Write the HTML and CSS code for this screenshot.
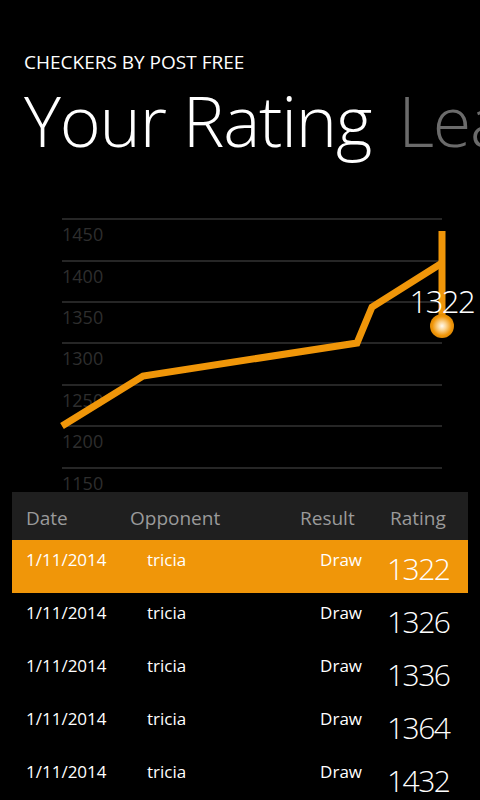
FILE: index.html
```html
<!DOCTYPE html>
<html lang="en">

<head>
    <meta charset="UTF-8">
    <meta name="viewport" content="width=device-width, initial-scale=1.0">
    <title>Checkers By Post Free</title>
    <link rel="stylesheet" href="styles.css">
</head>

<body>
    <header>
        <div class="app-title">CHECKERS BY POST FREE</div>
        <div class="pivot">
            <span class="pivot-item active">Your Rating</span>
            <span class="pivot-item">League</span>
        </div>
    </header>

    <div class="chart">
        <svg width="480" height="324" viewBox="0 168 480 324">
            <defs>
                <radialGradient id="dot" cx="50%" cy="50%" r="50%">
                    <stop offset="0%" stop-color="#fffaf0" />
                    <stop offset="35%" stop-color="#fbd390" />
                    <stop offset="80%" stop-color="#f09609" />
                    <stop offset="100%" stop-color="#e08a05" />
                </radialGradient>
            </defs>
            <g class="grid">
                <line x1="62" y1="219" x2="442" y2="219" />
                <line x1="62" y1="261" x2="442" y2="261" />
                <line x1="62" y1="302" x2="442" y2="302" />
                <line x1="62" y1="343" x2="442" y2="343" />
                <line x1="62" y1="385" x2="442" y2="385" />
                <line x1="62" y1="426" x2="442" y2="426" />
                <line x1="62" y1="468" x2="442" y2="468" />
            </g>
            <g class="axis">
                <text x="62" y="241">1450</text>
                <text x="62" y="283">1400</text>
                <text x="62" y="324">1350</text>
                <text x="62" y="365">1300</text>
                <text x="62" y="407">1250</text>
                <text x="62" y="448">1200</text>
                <text x="62" y="490">1150</text>
            </g>
            <polyline class="series" points="62,426 143,376 357,343 372,307 442,263" />
            <line class="series" x1="442" y1="231" x2="442" y2="326" />
            <text class="point-label" x="474" y="313">1322</text>
            <circle cx="442" cy="326" r="12" fill="url(#dot)" />
        </svg>
    </div>

    <div class="games">
        <div class="games-head">
            <span>Date</span>
            <span>Opponent</span>
            <span>Result</span>
            <span>Rating</span>
        </div>
        <div class="game selected">
            <span class="date">1/11/2014</span>
            <span class="opponent">tricia</span>
            <span class="result">Draw</span>
            <span class="rating">1322</span>
        </div>
        <div class="game">
            <span class="date">1/11/2014</span>
            <span class="opponent">tricia</span>
            <span class="result">Draw</span>
            <span class="rating">1326</span>
        </div>
        <div class="game">
            <span class="date">1/11/2014</span>
            <span class="opponent">tricia</span>
            <span class="result">Draw</span>
            <span class="rating">1336</span>
        </div>
        <div class="game">
            <span class="date">1/11/2014</span>
            <span class="opponent">tricia</span>
            <span class="result">Draw</span>
            <span class="rating">1364</span>
        </div>
        <div class="game">
            <span class="date">1/11/2014</span>
            <span class="opponent">tricia</span>
            <span class="result">Draw</span>
            <span class="rating">1432</span>
        </div>
    </div>
</body>

</html>
```

FILE: styles.css
```css
body {
    font-family: "Open Sans", "Noto Sans", sans-serif;
    margin: 0;
    padding: 0;
    background-color: #000;
    color: #fff;
    width: 480px;
    height: 800px;
    overflow: hidden;
}

header {
    padding: 52px 0 0 24px;
}

.app-title {
    font-size: 19px;
    line-height: 20px;
}

.pivot {
    white-space: nowrap;
    overflow: hidden;
    font-size: 70px;
    font-weight: 300;
    line-height: 96px;
    letter-spacing: -1.2px;
}

.pivot-item {
    color: #6b6b6b;
    margin-right: 10px;
}

.pivot-item.active {
    color: #fff;
}

.chart svg {
    display: block;
}

.grid line {
    stroke: #262626;
    stroke-width: 2;
}

.axis text {
    fill: #2e2e2e;
    font-size: 18px;
}

.series {
    fill: none;
    stroke: #f09609;
    stroke-width: 7;
}

.point-label {
    fill: #fff;
    font-size: 31px;
    font-weight: 300;
    letter-spacing: -1.6px;
    text-anchor: end;
}

.games {
    margin: 0 12px;
}

.games-head {
    display: grid;
    grid-template-columns: 104px 170px 90px auto;
    height: 48px;
    align-items: center;
    padding-left: 14px;
    padding-top: 4px;
    box-sizing: border-box;
    background-color: #1f1f1f;
    color: #9a9a9a;
    font-size: 19px;
}

.game {
    display: grid;
    grid-template-columns: 121px 150px 65px auto;
    height: 53px;
    padding-left: 14px;
    align-items: start;
    font-size: 17px;
    line-height: 24px;
}

.game.selected {
    background-color: #f09609;
}

.game span {
    padding-top: 8px;
}

.game .result {
    text-align: right;
}

.game .rating {
    padding: 11px 0 0 25px;
    font-size: 30px;
    font-weight: 300;
    line-height: 36px;
    letter-spacing: -1.5px;
}
```
